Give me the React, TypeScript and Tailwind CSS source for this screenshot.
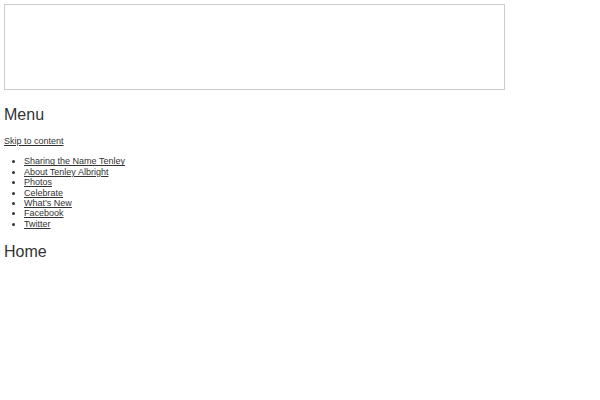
import React from "react";

const links = [
  "Sharing the Name Tenley",
  "About Tenley Albright",
  "Photos",
  "Celebrate",
  "What’s New",
  "Facebook",
  "Twitter",
];

export default function App() {
  return (
    <div className="min-h-[400px] bg-white p-[4px] font-['Liberation_Sans',Arial,sans-serif] text-[#333333]">
      <div className="h-[86px] w-[501px] border border-[#cccccc] bg-white" />
      <h2 className="mt-[16px] text-[16px] font-normal leading-[18px]">Menu</h2>
      <p className="mt-[12px] text-[9px] leading-[10.4px]">
        <a href="#content" className="text-[#333333] underline">
          Skip to content
        </a>
      </p>
      <ul className="mt-[10px] list-disc pl-[20px] text-[9px] leading-[10.4px]">
        {links.map((l) => (
          <li key={l}>
            <a href="#" className="text-[#333333] underline">
              {l}
            </a>
          </li>
        ))}
      </ul>
      <h2 className="mt-[14px] text-[16px] font-normal leading-[18px]">Home</h2>
    </div>
  );
}
